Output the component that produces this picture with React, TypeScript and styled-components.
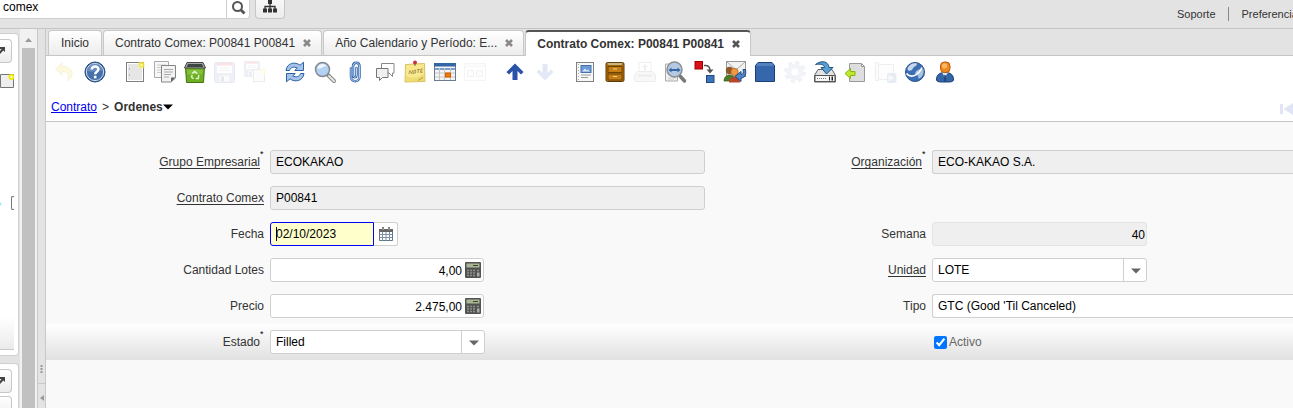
import React from "react";
import styled, { createGlobalStyle, css } from "styled-components";

const font = '"Liberation Sans", Arial, Helvetica, sans-serif';

const GlobalStyle = createGlobalStyle`
  *, *::before, *::after { box-sizing: border-box; }
  body { margin: 0; background: #e3e3e3; color: #333; font: 12px/16px ${font}; overflow: hidden; }
  button, input, select { font: inherit; color: inherit; margin: 0; }
  button { padding: 0; border: 0; background: none; cursor: pointer; }
`;

/* ---------- shell ---------- */

const Page = styled.div`
  display: flex;
  flex-direction: column;
  height: 100vh;
`;

const Header = styled.header`
  display: flex;
  flex: none;
  align-items: flex-start;
  height: 29px;
  border-bottom: 1px solid #c5c5c5;
`;

const SearchBox = styled.div`
  display: flex;
  width: 250px;
  height: 19px;
  background: #fff;
  border: solid #cfcfcf;
  border-width: 0 1px 1px 0;
  border-radius: 0 0 3px 0;
`;

const SearchInput = styled.input`
  flex: 1;
  min-width: 0;
  border: 0;
  padding: 0 3px 4px;
  height: 18px;
  background: transparent;
  color: #000;
  outline: 0;
`;

const SearchButton = styled.button`
  display: flex;
  justify-content: center;
  width: 23px;
  height: 18px;
  border-left: 1px solid #cfcfcf;
`;

const MenuButton = styled.button`
  display: flex;
  justify-content: center;
  width: 30px;
  height: 19px;
  margin-left: 5px;
  border: solid #c6c6c6;
  border-width: 0 1px 1px;
  border-radius: 0 0 4px 4px;
  background: linear-gradient(#f8f8f8, #ececec);
`;

const HeaderLinks = styled.nav`
  display: flex;
  margin-left: auto;
  padding-top: 7px;
  font-size: 11px;
  white-space: nowrap;
  width: 116px;
`;

const HeaderLink = styled.a`
  color: #333;
  text-decoration: none;
  line-height: 14px;
  & + & {
    margin-left: 12px;
    padding-left: 13px;
    border-left: 1px solid #888;
  }
`;

const Body = styled.div`
  display: flex;
  flex: 1;
  min-height: 0;
`;

/* ---------- left side ---------- */

const Side = styled.aside`
  display: flex;
  flex-direction: column;
  gap: 7px;
  width: 19px;
  padding-top: 4px;
  overflow: hidden;
`;

const SidePanel = styled.section<{ $grow?: boolean }>`
  display: flex;
  flex-direction: column;
  align-items: flex-start;
  gap: 3px;
  width: 19px;
  height: ${(p) => (p.$grow ? "auto" : "323px")};
  flex: ${(p) => (p.$grow ? "1" : "none")};
  padding-top: 5px;
  background: #fff;
  border: solid #cfcfcf;
  border-width: 1px 1px ${(p) => (p.$grow ? "0" : "1px")} 0;
  border-radius: ${(p) => (p.$grow ? "0 4px 0 0" : "0 4px 4px 0")};
  overflow: hidden;
`;

const SideButton = styled.button`
  display: flex;
  flex: none;
  align-items: center;
  width: 12px;
  height: 24px;
  border: solid #c8c8c8;
  border-width: 1px 1px 1px 0;
  border-radius: 0 4px 4px 0;
  background: linear-gradient(#fff, #ececec);
`;

const SideNew = styled.button`
  display: flex;
  margin-top: 7px;
  height: 16px;
`;

const SideMarker = styled.div`
  display: flex;
  align-items: center;
  width: 14px;
  height: 14px;
  margin: auto 0;
  background: radial-gradient(circle at 0 8px, #9beef5 1px, transparent 2px);
  &::after {
    content: "";
    margin-left: auto;
    width: 3px;
    height: 14px;
    border: 1px solid #777;
    border-right: 0;
    border-radius: 2px 0 0 2px;
  }
`;

const SideFooter = styled.div`
  width: 14px;
  height: 33px;
  margin-bottom: 5px;
  border-bottom: 1px solid #c8c8c8;
  background: linear-gradient(#fff, #ebebeb);
`;

const ScrollTrack = styled.div`
  display: flex;
  flex-direction: column;
  width: 17px;
  margin-left: 1px;
  padding: 2px 2px 0;
  background: #f1f1f1;
`;

const ScrollThumb = styled.div`
  flex: 1;
  background: #c1c1c1;
`;

const ScrollArrow = styled.svg`
  width: 13px;
  height: 17px;
`;

const Splitter = styled.div`
  display: flex;
  flex-direction: column;
  align-items: center;
  justify-content: flex-end;
  width: 9px;
  border: solid #c8c8c8;
  border-width: 0 1px;
  color: #999;
`;

const SplitterPart = styled.button<{ $line?: boolean }>`
  display: flex;
  align-items: center;
  justify-content: center;
  width: 7px;
  height: ${(p) => (p.$line ? "25px" : "27px")};
  border-top: ${(p) => (p.$line ? "1px solid #c8c8c8" : "0")};
  padding-top: ${(p) => (p.$line ? "4px" : "0")};
`;

/* ---------- main area ---------- */

const Main = styled.main`
  display: flex;
  flex-direction: column;
  flex: 1;
  min-width: 0;
  background: #f9f9f9;
`;

const TabBar = styled.div`
  display: flex;
  gap: 1px;
  height: 27px;
  padding: 1px 2px 0;
  background: #e3e3e3;
  border-bottom: 1px solid #c5c5c5;
`;

const Tab = styled.div<{ $active?: boolean; $wide?: boolean }>`
  display: flex;
  align-items: center;
  gap: 7px;
  height: 25px;
  padding: ${(p) => (p.$wide ? "0 9px 0 11px" : "0 12px")};
  border: 1px solid #c8c8c8;
  border-bottom: 0;
  border-radius: 4px 4px 0 0;
  background: linear-gradient(#fff, #ececec);
  ${(p) =>
    p.$active &&
    css`
      height: 26px;
      border-top: 2px solid #555;
      background: #fff;
      font-weight: bold;
    `}
`;

const TabLabel = styled.button`
  white-space: nowrap;
`;

const TabClose = styled.button<{ $dark?: boolean }>`
  display: flex;
  color: ${(p) => (p.$dark ? "#555" : "#888")};
`;

const ToolArea = styled.div`
  background: #fff;
  border-bottom: 1px solid #c5c5c5;
`;

const Toolbar = styled.div`
  display: flex;
  gap: 10px;
  height: 32px;
  padding: 1px 4px 0;
`;

const ToolGroup = styled.div`
  display: flex;
`;

const ToolButton = styled.button<{ $dim?: boolean }>`
  display: flex;
  align-items: center;
  justify-content: center;
  width: 30px;
  height: 30px;
  opacity: ${(p) => (p.$dim ? 0.13 : 1)};
`;

const Crumbs = styled.div`
  display: flex;
  align-items: center;
  gap: 5px;
  height: 33px;
  padding: 5px 0 0 5px;
`;

const CrumbLink = styled.a`
  color: #0000ee;
`;

const CrumbMenu = styled.button`
  display: flex;
  align-items: center;
  font-weight: bold;
`;

const FirstRecord = styled.button`
  display: flex;
  margin: 4px 0 0 auto;
`;

/* ---------- form ---------- */

const Form = styled.form`
  display: flex;
  flex-direction: column;
  padding-top: 22px;
`;

const Row = styled.div<{ $last?: boolean }>`
  display: grid;
  grid-template-columns: 218fr 435fr 215fr 361fr;
  gap: 6px;
  align-items: center;
  height: 36px;
  background: ${(p) => (p.$last ? "linear-gradient(#fff, #e1e1e1)" : "transparent")};
`;

const LabelCell = styled.div`
  display: flex;
  justify-content: flex-end;
`;

const Label = styled.label<{ $linked?: boolean }>`
  ${(p) =>
    p.$linked &&
    css`
      text-decoration: underline;
      text-underline-offset: 2px;
    `}
`;

const Star = styled.sup`
  width: 4px;
  height: 9px;
  margin-top: -4px;
  font-size: 9px;
  line-height: 9px;
  color: #000;
`;

const fieldBox = css`
  height: 24px;
  border: 1px solid #cfcfcf;
  border-radius: 3px;
  background: #fff;
  color: #000;
  outline: 0;
`;

const TextField = styled.input<{ $open?: boolean }>`
  ${fieldBox}
  width: 100%;
  padding: 0 5px;
  background: #efefef;
  ${(p) => p.$open && "border-right: 0; border-radius: 3px 0 0 3px;"}
`;

const NumberField = styled.input`
  ${fieldBox}
  width: 215px;
  padding: 2px 1px 0;
  border-color: #e3e3e3;
  background: #efefef;
  text-align: right;
`;

const DateBox = styled.div`
  position: relative;
  display: flex;
`;

const DateField = styled.input`
  ${fieldBox}
  width: 104px;
  padding: 0 5px;
  border-color: #0000ff;
  border-radius: 3px 0 0 3px;
  background: #ffffcc;
`;

const Caret = styled.span`
  position: absolute;
  left: 6px;
  top: 5px;
  width: 1px;
  height: 14px;
  background: #000;
`;

const DateButton = styled.button`
  display: flex;
  align-items: center;
  justify-content: center;
  width: 24px;
  height: 24px;
  border: 1px solid #cfcfcf;
  border-left: 0;
  border-radius: 0 3px 3px 0;
  background: #fff;
`;

const CalcBox = styled.div`
  ${fieldBox}
  display: flex;
  align-items: center;
  gap: 3px;
  width: 214px;
  padding-right: 2px;
`;

const CalcInput = styled.input`
  flex: 1;
  min-width: 0;
  height: 22px;
  padding: 2px 0 0;
  border: 0;
  background: none;
  text-align: right;
  outline: 0;
`;

const CalcButton = styled.button`
  display: flex;
`;

const ComboBox = styled.div<{ $open?: boolean }>`
  display: grid;
  width: ${(p) => (p.$open ? "100%" : "215px")};
  & > * {
    grid-area: 1 / 1;
  }
`;

const ComboSelect = styled.select<{ $open?: boolean }>`
  ${fieldBox}
  appearance: none;
  width: 100%;
  padding: 0 5px;
  ${(p) => p.$open && "border-right: 0; border-radius: 3px 0 0 3px;"}
`;

const ComboArrow = styled.span`
  display: flex;
  align-items: center;
  justify-content: center;
  justify-self: end;
  width: 24px;
  height: 24px;
  padding-top: 2px;
  border-left: 1px solid #cfcfcf;
  pointer-events: none;
`;

const CheckLabel = styled.label`
  display: flex;
  align-items: center;
  gap: 2px;
  padding-left: 2px;
  color: #666;
`;

const CheckBox = styled.input`
  width: 13px;
  height: 13px;
  accent-color: #0075ff;
`;

/* ---------- icons ---------- */

const Icon = ({ children, size = 24 }: { children: React.ReactNode; size?: number }) => (
  <svg width={size} height={size} viewBox="0 0 24 24" fill="none" aria-hidden="true">
    {children}
  </svg>
);

const Sun = ({ x, y }: { x: number; y: number }) => (
  <g>
    <circle cx={x} cy={y} r="3.6" fill="#fbf37a" opacity=".6" />
    <circle cx={x} cy={y} r="2.4" fill="#f4e21c" />
    <circle cx={x} cy={y} r="1.3" fill="#fffcc0" />
  </g>
);

const Floppy = ({ x, y, s }: { x: number; y: number; s: number }) => (
  <g transform={`translate(${x} ${y}) scale(${s})`}>
    <rect x=".5" y=".5" width="20" height="20" rx="2" fill="#7f9fcb" stroke="#3465a4" />
    <rect x="3" y="1" width="15" height="10" fill="#fff" />
    <rect x="3" y="1" width="15" height="2.5" fill="#ef2929" />
    <path d="M5 6h11M5 8.500h11" stroke="#aaa" />
    <rect x="5" y="13" width="11" height="7" fill="#eee" stroke="#777" />
    <rect x="7" y="14.500" width="3" height="5" fill="#345f94" />
  </g>
);

const icons: Record<string, React.ReactNode> = {
  undo: (
    <path d="M9 2.500 2.500 9 9 15.500V11.500c5 0 8 3 5.500 9.500 6.500-4.500 7-14.500-5.500-14.700z" fill="#edd400" stroke="#c4a000" />
  ),
  help: (
    <>
      <circle cx="12" cy="12" r="10" fill="#3465a4" stroke="#274b7d" />
      <circle cx="12" cy="12" r="8.600" fill="#4670ac" stroke="#d5e0ee" />
      <path d="M4.500 11a7.500 7.500 0 0 1 15 0c-5-1.500-9 2-15 0z" fill="#7f9fcb" opacity=".6" />
      <path d="M8.800 9.600C8.800 5.500 15.400 5.500 15.400 9.300c0 2.500-3.200 2.500-3.200 5" stroke="#fff" strokeWidth="2.500" />
      <circle cx="12.200" cy="17" r="1.500" fill="#fff" />
    </>
  ),
  create: (
    <>
      <rect x="3.500" y="2.500" width="17" height="19" fill="#fff" stroke="#808080" />
      <rect x="5" y="4" width="14" height="16" fill="#e6e6e6" />
      <path d="M6.500 8v1.500M6.500 14v1.500" stroke="#aaa" />
      <Sun x={18.5} y={5} />
    </>
  ),
  copy: (
    <>
      <path d="M1.500 1.500h14v16h-14z" fill="#f7f7f7" stroke="#aaa" />
      <path d="M4 5h9M4 7.500h5M4 10h4M4 12.500h4" stroke="#ccc" />
      <path d="M8.500 5.500h14v12.500l-4.500 4h-9.500z" fill="#f3f3f3" stroke="#858585" />
      <path d="M11 9.500h9M11 12h9M11 14.500h7M11 17h5" stroke="#aaa" />
      <path d="M22.500 17.500H18V22z" fill="#666" />
    </>
  ),
  trash: (
    <>
      <path d="M2.500 7h19L20.500 22.500h-17z" fill="#6cae24" stroke="#44750f" />
      <path d="M4 10h16l-.500 4.500h-15z" fill="#91cc4a" opacity=".6" />
      <path d="M4 2.500h16l2.500 5.500h-21z" fill="#a5a8a2" stroke="#444" />
      <path d="M5 4h14l1.200 3H3.800z" fill="#3d4444" />
      <path d="m9.200 13.500 2.500-2.300 2.500 2.500M15.800 15l-.500 3.500h-2.500M10.500 18.700 8.500 17l.700-2" stroke="#e1f1cc" strokeWidth="1.500" />
    </>
  ),
  save: <Floppy x={1} y={2} s={1} />,
  saveNew: (
    <>
      <Floppy x={1} y={1} s={0.75} />
      <rect x="10.500" y="9.500" width="11" height="12" fill="#eee" stroke="#777" />
      <Sun x={20} y={11} />
    </>
  ),
  refresh: (
    <>
      <path d="M3 10.500C4 2.500 12.500 1.500 17 5.200l3.500-3v8.300h-8.800l2.600-2.500C11 6.500 7.500 7 6.500 10.500z" fill="#a4c3ea" stroke="#3062a3" strokeLinejoin="round" />
      <path d="M21 13.500c-1 8-9.500 9-14 5.300l-3.500 3v-8.300h8.800l-2.600 2.500c3.300 1.500 6.800 1 7.800-2.500z" fill="#a4c3ea" stroke="#3062a3" strokeLinejoin="round" />
    </>
  ),
  find: (
    <>
      <path d="m15 15 6 6" stroke="#8a8d88" strokeWidth="4" strokeLinecap="round" />
      <path d="m16 16 5 5" stroke="#e8e8e8" strokeWidth="1.800" strokeLinecap="round" />
      <circle cx="9.500" cy="9.500" r="7" fill="#b3d1f2" stroke="#85898f" strokeWidth="1.500" />
      <path d="M4.500 9a5 5 0 0 1 9-3c-3 0-5 3-9 3z" fill="#fff" opacity=".8" />
    </>
  ),
  clip: (
    <>
      <path d="M8 8.500v8.500c0 5.500 8.500 5.500 8.500 0V6.500c0-5-6.500-5-6.500 0V15c0 3 3.500 3 3.500 0V8" stroke="#3565a8" strokeWidth="2.500" strokeLinecap="round" />
      <path d="M8 8.500v8.500c0 5.500 8.500 5.500 8.500 0V6.500c0-5-6.500-5-6.500 0V15c0 3 3.500 3 3.500 0V8" stroke="#b7d2f2" strokeWidth="1" strokeLinecap="round" />
    </>
  ),
  chat: (
    <>
      <path d="M8.500 3.500h12.500v9.500h-1.500v3.500L16 13H8.500z" fill="#fff" stroke="#888" />
      <path d="M3.500 8.500H15v9H9.500l-3 3v-3h-3z" fill="#f0f0f0" stroke="#777" />
    </>
  ),
  note: (
    <>
      <path d="m2.500 4.500 19-1 .500 18-20 .500z" fill="#f8e98f" stroke="#d9c25e" />
      <path d="M3 16c6 3 12 2 18-2l.500 7-18.500 .500z" fill="#e9d468" opacity=".7" />
      <path d="m6 14 .800-3.500 2 3.500.800-4M11 10.500l1.800-.500-.300 3-2 .500zM14 9.500h3M15.500 9.500l-.500 3.500M20 9h-2l-.500 3.500h2M17.500 11h2" stroke="#9d8a45" strokeWidth=".800" />
      <path d="m15 20.500 5-3" stroke="#b09a4a" />
      <path d="M12 3v3" stroke="#666" />
      <circle cx="12" cy="2.500" r="2" fill="#cc2f3f" />
    </>
  ),
  calendar: (
    <>
      <rect x="1.500" y="3.500" width="21" height="17" fill="#f5f5f5" stroke="#6b7a90" />
      <rect x="1" y="3" width="22" height="3.500" fill="#3465a4" />
      <path d="M2 9h20" stroke="#7f9fcb" strokeWidth="2" />
      <path d="M2 13h20M2 17h20M6.500 8v12M11.500 8v12M17.500 8v12" stroke="#c4c4c4" />
      <rect x="12.500" y="13" width="5" height="4" fill="#f57900" stroke="#ce5c00" />
    </>
  ),
  board: (
    <g opacity=".7">
      <rect x="1.500" y="3.500" width="21" height="17" fill="#fff" stroke="#999" />
      <path d="M2 6h20" stroke="#ccc" strokeWidth="3" />
      <path d="M4.500 10.500h6v6h-6zM13.500 10.500h6v6h-6z" stroke="#777" fill="#eee" />
    </g>
  ),
  up: <path d="m12 3.500 8.500 8.500-2.500 2.500-3.500-3.500V20h-5v-9L6 14.500 3.500 12z" fill="#2a52a8" />,
  down: <path d="M12 20.500 20.500 12 18 9.500 14.500 13V4h-5v9L6 9.500 3.500 12z" fill="#2a52b8" />,
  report: (
    <>
      <rect x="3.500" y="2.500" width="17" height="19" fill="#f7f7f7" stroke="#808080" />
      <path d="M5.500 4v16" stroke="#aaa" strokeDasharray="1 2" />
      <rect x="8" y="5.500" width="10" height="7" fill="#6d9bd6" stroke="#4470ad" />
      <path d="m9 11.500 3-3 2 2 1-1 2 2z" fill="#d8e8f8" />
      <path d="M8 15h10M8 17.500h7" stroke="#999" />
    </>
  ),
  archive: (
    <>
      <rect x="3" y="2.500" width="18" height="19" rx="1.500" fill="#b5700c" stroke="#5c3a08" />
      <path d="M4 3h16l-1 2H5z" fill="#e8d8a0" stroke="#6b5427" strokeWidth=".500" />
      <rect x="5" y="6.500" width="14" height="6" fill="#c67d14" stroke="#6e4405" />
      <rect x="5" y="14" width="14" height="6" fill="#c67d14" stroke="#6e4405" />
      <path d="M10 9h4M10 16.500h4" stroke="#e8d8a0" strokeWidth="1.200" />
    </>
  ),
  print: (
    <>
      <path d="M6 2.500h12v11H6z" fill="#fff" stroke="#888" />
      <path d="m12 4 3 3h-2v4h-2V7H9z" fill="#888" />
      <path d="M4.500 11.500h15l3 3.500v5.500c0 .500-.500 1-1 1h-19c-.500 0-1-.500-1-1V15z" fill="#ccc" stroke="#777" />
      <path d="M5 15.500h14" stroke="#777" strokeWidth="2" />
    </>
  ),
  zoomAcross: (
    <>
      <path d="M2.500 4h12v17h-12z" fill="#f2f2f2" stroke="#aaa" />
      <path d="M5 18h8M5 20h6" stroke="#ccc" />
      <path d="m17 16 4.500 5" stroke="#777a76" strokeWidth="3.500" strokeLinecap="round" />
      <circle cx="11.500" cy="9.500" r="7.500" fill="#b5cae2" stroke="#8a8d91" strokeWidth="1.500" />
      <path d="m5.500 10 3-2.500v1.500h6V7.500l3 2.500-3 2.500V11h-6v1.500z" fill="#3465a4" />
    </>
  ),
  workflow: (
    <>
      <rect x="2" y="1.500" width="7.500" height="7.500" fill="#d90f1c" stroke="#a40000" />
      <rect x="13.500" y="15.500" width="7.500" height="7" fill="#3f73b8" stroke="#204a87" />
      <path d="M11 5.500c4-.500 6 1 6 5" stroke="#555" strokeWidth="1.500" />
      <path d="M13.500 9.500h7L17 13.500z" fill="#555" />
    </>
  ),
  requests: (
    <>
      <rect x="3.500" y="1.500" width="19" height="15" fill="#f2f2f2" stroke="#999" />
      <path d="m4 2 9 8 9-8" stroke="#aaa" />
      <circle cx="6.500" cy="10.500" r="3.700" fill="#8f5a2b" />
      <path d="M1 21c0-8 11-8 11 0z" fill="#4e7a2c" stroke="#2f5a0c" strokeWidth=".700" />
      <circle cx="11.500" cy="12" r="3.700" fill="#ee9a44" stroke="#a85f18" strokeWidth=".700" />
      <path d="M6 22.500c0-7.500 11-7.500 11 0z" fill="#b8472a" />
      <path d="M22.500 9.500c1 6-1 8.500-4.500 8.500v3.500L12 16.500l6-5v3c2 0 3-1.500 2-5z" fill="#5083c4" stroke="#204a87" />
    </>
  ),
  product: (
    <>
      <path d="M5 2.500h14l2.500 3v16h-19v-16z" fill="#3667ad" stroke="#1c3f77" />
      <path d="M5 3h14l2 3H3z" fill="#5482c0" />
    </>
  ),
  gear: (
    <>
      <circle cx="12" cy="12" r="9.300" stroke="#8aa0bd" strokeWidth="3.500" strokeDasharray="4 3.300" />
      <circle cx="12" cy="12" r="6" stroke="#9fb2ca" strokeWidth="5" />
    </>
  ),
  exportData: (
    <>
      <path d="M5 9.500h14l3.500 6v6.500h-21v-6.500z" fill="#e2e2e2" stroke="#666" />
      <path d="M2 15.500h20v6H2z" fill="#f7f7f7" stroke="#555" />
      <path d="M4 18.500h9" stroke="#777" strokeDasharray="1 1" />
      <path d="M16 16.500h1v4h-1zM18.500 16.500h1.500v4h-1.500z" fill="#222" />
      <path d="M2.500 4.500C8 0 15.500 1 16 7.500h4L13.500 14 8 7.500h3.500c0-3-4-4-9-3z" fill="#5b9fd0" stroke="#1f5584" />
    </>
  ),
  importFile: (
    <>
      <path d="M6.500 3.500h12l3 3v15h-15z" fill="#dedede" stroke="#999" />
      <path d="M18.500 3.500v3h3z" fill="#fff" stroke="#999" />
      <path d="M2 13.500 7.500 8.500v3H12v4H7.500v3z" fill="#c0e82a" stroke="#85b510" />
    </>
  ),
  script: (
    <>
      <path d="M2.500 2.500h3v18h-3zM5.500 4.500h15v15h-15z" fill="#f4f4f4" stroke="#888" />
      <rect x="14" y="13" width="9.500" height="10" rx="2" fill="#4f74a8" />
      <path d="M21 18h-4m2-2-2 2 2 2M16 15v6" stroke="#fff" />
    </>
  ),
  globe: (
    <>
      <circle cx="12" cy="12" r="9.500" fill="#3c6eb4" stroke="#284f87" />
      <path d="M4.500 8c2-4 6-5.500 9.500-4.500 0 2-1.500 2.500-3 3.500s-1 3-3.500 3.500S5 11 4.500 8z" fill="#c8d8ec" />
      <path d="M12 12.500c2-3 6-4.500 8.500-3 .500 4-1 7.500-4 9-2 0-1-2-2-3.500s-2.500-1-2.500-2.500z" fill="#a9c2e0" />
      <path d="M3.500 13.500c3.500 4.500 11 3.500 15.500-6" stroke="#fff" strokeWidth="1.700" />
    </>
  ),
  user: (
    <>
      <path d="M3.500 20c0-5.500 3-7.500 8.500-7.500s8.500 2 8.500 7.500c0 1-2 2-4 2h-9c-2 0-4-1-4-2z" fill="#3465a4" stroke="#1c3f77" />
      <path d="m9 12.500 3 5 3-5z" fill="#dce6f3" />
      <path d="M12 15v6.500" stroke="#1c3f77" strokeWidth="1.500" />
      <rect x="7.500" y="2" width="9.500" height="10.500" rx="4" fill="#f08a1d" stroke="#b5570a" />
      <circle cx="11.500" cy="5.800" r="2.600" fill="#fbb66a" />
    </>
  ),
};

const CloseIcon = () => (
  <svg width="10" height="10" viewBox="0 0 10 10" aria-hidden="true">
    <path d="m2 2 6 6M8 2 2 8" stroke="currentColor" strokeWidth="2.600" />
  </svg>
);

const DownTriangle = ({ color }: { color: string }) => (
  <svg width="10" height="6" viewBox="0 0 10 6" aria-hidden="true">
    <path d="M0 .500h10L5 5.500z" fill={color} />
  </svg>
);

const SearchIcon = () => (
  <svg width="15" height="15" viewBox="0 0 15 15" aria-hidden="true">
    <circle cx="6.500" cy="6.500" r="4.500" fill="none" stroke="#555" strokeWidth="2" />
    <path d="m9.500 9.500 4 4" stroke="#555" strokeWidth="2.800" />
  </svg>
);

const TreeIcon = () => (
  <svg width="16" height="14" viewBox="0 0 16 14" aria-hidden="true">
    <path d="M6 0h4v4H6zM1 8.500h4v4H1zM6 8.500h4v4H6zM11 8.500h4v4h-4z" fill="#333" />
    <path d="M8 4v5M3 9V6.500h10V9" fill="none" stroke="#333" strokeWidth="1.300" />
  </svg>
);

const CornerArrow = () => (
  <svg width="6" height="10" viewBox="0 0 6 10" aria-hidden="true">
    <path d="M0 1h5v5L3.300 4.500 0 8V5l1.500-2H0z" fill="#444" />
  </svg>
);

const GridCalendar = () => (
  <svg width="14" height="14" viewBox="0 0 14 14" aria-hidden="true">
    <path d="M.500 2.500h13v11H.500z" fill="#fff" stroke="#5f7186" />
    <path d="M0 2h14v3H0z" fill="#666" />
    <path d="M.500 7.500h13M.500 10.500h13M3.500 5v9M7 5v9M10.500 5v9" stroke="#7d90a6" />
    <path d="M4 0v3.500M10 0v3.500" stroke="#666" strokeWidth="2" />
    <path d="M4 .500v2.500M10 .500v2.500" stroke="#ddd" strokeWidth=".700" />
  </svg>
);

const Calculator = () => (
  <svg width="16" height="16" viewBox="0 0 16 16" aria-hidden="true">
    <rect width="16" height="16" rx="1" fill="#50534f" />
    <rect x="1.500" y="1.500" width="13" height="4" fill="#aab596" />
    <path d="M8 3.500h5" stroke="#3c432f" />
    <path d="M2 8.500h9M2 11h9M2 13.500h9M12 8.500h2.500" stroke="#8e908d" strokeWidth="1.500" strokeDasharray="2 1" />
    <rect x="12" y="10.500" width="2.500" height="4" fill="#aaa" />
  </svg>
);

/* ---------- data ---------- */

type Tool = [icon: string, title: string, dim?: boolean];

const toolGroups: Tool[][] = [
  [["undo", "Deshacer", true], ["help", "Ayuda"]],
  [["create", "Nuevo"], ["copy", "Copiar"], ["trash", "Eliminar"], ["save", "Guardar", true], ["saveNew", "Guardar y crear", true]],
  [["refresh", "Refrescar"], ["find", "Buscar"], ["clip", "Anexo"], ["chat", "Chat"], ["note", "Nota"], ["calendar", "Calendario"], ["board", "Cuadro", true]],
  [["up", "Registro padre"], ["down", "Registro detalle", true]],
  [
    ["report", "Informe"],
    ["archive", "Archivo"],
    ["print", "Imprimir", true],
    ["zoomAcross", "Visualizar"],
    ["workflow", "Flujo de trabajo"],
    ["requests", "Solicitudes"],
    ["product", "Producto"],
    ["gear", "Proceso", true],
    ["exportData", "Exportar"],
    ["importFile", "Importar"],
    ["script", "CSV", true],
    ["globe", "Web"],
    ["user", "Usuario"],
  ],
];

const tabs = [
  { label: "Contrato Comex: P00841 P00841" },
  { label: "Año Calendario y Período: E..." },
  { label: "Contrato Comex: P00841 P00841", active: true },
];

/* ---------- components ---------- */

const FieldLabel = ({ id, text, linked, required }: { id: string; text: string; linked?: boolean; required?: boolean }) => (
  <LabelCell>
    <Label htmlFor={id} $linked={linked}>
      {text}
    </Label>
    {required && <Star>*</Star>}
  </LabelCell>
);

const Combo = ({ id, value, open }: { id: string; value: string; open?: boolean }) => (
  <ComboBox $open={open}>
    <ComboSelect id={id} $open={open}>
      <option>{value}</option>
    </ComboSelect>
    {!open && (
      <ComboArrow>
        <DownTriangle color="#666" />
      </ComboArrow>
    )}
  </ComboBox>
);

const Amount = ({ id, value }: { id: string; value: string }) => (
  <CalcBox>
    <CalcInput id={id} defaultValue={value} />
    <CalcButton type="button" aria-label="Calculadora">
      <Calculator />
    </CalcButton>
  </CalcBox>
);

export default function App() {
  return (
    <Page>
      <GlobalStyle />
      <Header>
        <SearchBox>
          <SearchInput aria-label="Buscar en el menú" defaultValue="comex" />
          <SearchButton aria-label="Buscar">
            <SearchIcon />
          </SearchButton>
        </SearchBox>
        <MenuButton aria-label="Menú">
          <TreeIcon />
        </MenuButton>
        <HeaderLinks>
          <HeaderLink href="#soporte">Soporte</HeaderLink>
          <HeaderLink href="#preferencias">Preferencias</HeaderLink>
        </HeaderLinks>
      </Header>

      <Body>
        <Side>
          <SidePanel>
            <SideButton aria-label="Maximizar">
              <CornerArrow />
            </SideButton>
            <SideNew aria-label="Nuevo">
              <svg width="14" height="16" viewBox="0 0 14 16" aria-hidden="true">
                <path d="M.500 1.500h13v13H.500z" fill="#eee" stroke="#777" />
                <circle cx="11.500" cy="4" r="3" fill="#f4e60c" />
                <circle cx="11.500" cy="4" r="1.200" fill="#fffcc0" />
              </svg>
            </SideNew>
            <SideMarker />
            <SideFooter />
          </SidePanel>
          <SidePanel $grow>
            <SideButton aria-label="Maximizar">
              <CornerArrow />
            </SideButton>
            <SideButton aria-label="Refrescar">
              <svg width="5" height="10" viewBox="0 0 5 10" aria-hidden="true">
                <path d="M0 5.500 4.500 10H0z" fill="#3465a4" />
              </svg>
            </SideButton>
          </SidePanel>
        </Side>
        <ScrollTrack>
          <ScrollArrow viewBox="0 0 13 17" aria-hidden="true">
            <path d="M3 11h7L6.500 7z" fill="#999" />
          </ScrollArrow>
          <ScrollThumb />
        </ScrollTrack>
        <Splitter>
          <SplitterPart aria-label="Mover división">
            <svg width="3" height="9" viewBox="0 0 3 9" aria-hidden="true">
              <path d="M.500 0h2v2h-2zM.500 3h2v2h-2zM.500 6h2v2h-2z" fill="#999" />
            </svg>
          </SplitterPart>
          <SplitterPart $line aria-label="Contraer panel">
            <svg width="4" height="6" viewBox="0 0 4 6" aria-hidden="true">
              <path d="M4 0v6L0 3z" fill="#999" />
            </svg>
          </SplitterPart>
        </Splitter>

        <Main>
          <TabBar>
            <Tab>
              <TabLabel>Inicio</TabLabel>
            </Tab>
            {tabs.map((t, i) => (
              <Tab key={i} $active={t.active} $wide>
                <TabLabel>{t.label}</TabLabel>
                <TabClose aria-label="Cerrar" $dark={t.active}>
                  <CloseIcon />
                </TabClose>
              </Tab>
            ))}
          </TabBar>

          <ToolArea>
            <Toolbar>
              {toolGroups.map((group, i) => (
                <ToolGroup key={i}>
                  {group.map(([icon, title, dim]) => (
                    <ToolButton key={icon} aria-label={title} $dim={dim}>
                      <Icon>{icons[icon]}</Icon>
                    </ToolButton>
                  ))}
                </ToolGroup>
              ))}
            </Toolbar>
            <Crumbs>
              <CrumbLink href="#contrato">Contrato</CrumbLink>
              <span>&gt;</span>
              <CrumbMenu>
                Ordenes
                <DownTriangle color="#000" />
              </CrumbMenu>
              <FirstRecord aria-label="Primer registro">
                <svg width="13" height="12" viewBox="0 0 13 12" aria-hidden="true">
                  <path d="M0 1h3v10H0zM13 0v12L3.500 6z" fill="#e0e5f4" />
                </svg>
              </FirstRecord>
            </Crumbs>
          </ToolArea>

          <Form onSubmit={(e) => e.preventDefault()}>
            <Row>
              <FieldLabel id="grupo" text="Grupo Empresarial" linked required />
              <TextField id="grupo" readOnly value="ECOKAKAO" />
              <FieldLabel id="organizacion" text="Organización" linked required />
              <TextField id="organizacion" readOnly value="ECO-KAKAO S.A." $open />
            </Row>
            <Row>
              <FieldLabel id="contrato" text="Contrato Comex" linked />
              <TextField id="contrato" readOnly value="P00841" />
            </Row>
            <Row>
              <FieldLabel id="fecha" text="Fecha" />
              <DateBox>
                <DateField id="fecha" defaultValue="02/10/2023" />
                <Caret />
                <DateButton type="button" aria-label="Abrir calendario">
                  <GridCalendar />
                </DateButton>
              </DateBox>
              <FieldLabel id="semana" text="Semana" />
              <NumberField id="semana" readOnly value="40" />
            </Row>
            <Row>
              <FieldLabel id="cantidad" text="Cantidad Lotes" />
              <Amount id="cantidad" value="4,00" />
              <FieldLabel id="unidad" text="Unidad" linked />
              <Combo id="unidad" value="LOTE" />
            </Row>
            <Row>
              <FieldLabel id="precio" text="Precio" />
              <Amount id="precio" value="2.475,00" />
              <FieldLabel id="tipo" text="Tipo" />
              <Combo id="tipo" value="GTC (Good 'Til Canceled)" open />
            </Row>
            <Row $last>
              <FieldLabel id="estado" text="Estado" required />
              <Combo id="estado" value="Filled" />
              <span />
              <CheckLabel>
                <CheckBox type="checkbox" defaultChecked />
                Activo
              </CheckLabel>
            </Row>
          </Form>
        </Main>
      </Body>
    </Page>
  );
}
